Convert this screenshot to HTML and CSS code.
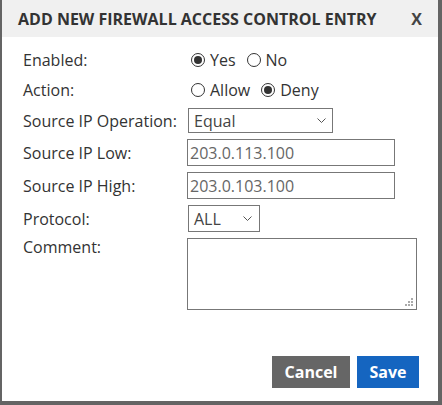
FILE: index.html
```html
<!DOCTYPE html>
<html>
<head>
<meta charset="utf-8">
<link rel="stylesheet" href="styles.css">
</head>
<body>
<div class="dialog">
  <div class="header">
    <span class="title">ADD NEW FIREWALL ACCESS CONTROL ENTRY</span>
    <span class="close">X</span>
  </div>
  <div class="form">
    <div class="row r-enabled">
      <span class="label">Enabled:</span>
      <div class="radios">
        <label class="opt"><span class="radio on"></span>Yes</label>
        <label class="opt"><span class="radio"></span>No</label>
      </div>
    </div>
    <div class="row r-action">
      <span class="label">Action:</span>
      <div class="radios">
        <label class="opt"><span class="radio"></span>Allow</label>
        <label class="opt"><span class="radio on"></span>Deny</label>
      </div>
    </div>
    <div class="row r-op">
      <span class="label">Source IP Operation:</span>
      <div class="select sel-op"><span>Equal</span><svg class="chev" width="9" height="5" viewBox="0 0 9 5"><path d="M0.5 0.5 L4.5 4.5 L8.5 0.5" fill="none" stroke="#555" stroke-width="1"/></svg></div>
    </div>
    <div class="row r-low">
      <span class="label">Source IP Low:</span>
      <div class="input">203.0.113.100</div>
    </div>
    <div class="row r-high">
      <span class="label">Source IP High:</span>
      <div class="input">203.0.103.100</div>
    </div>
    <div class="row r-proto">
      <span class="label">Protocol:</span>
      <div class="select sel-proto"><span>ALL</span><svg class="chev" width="9" height="5" viewBox="0 0 9 5"><path d="M0.5 0.5 L4.5 4.5 L8.5 0.5" fill="none" stroke="#555" stroke-width="1"/></svg></div>
    </div>
    <div class="row r-comment">
      <span class="label">Comment:</span>
      <div class="textarea">
        <svg class="grip" width="9" height="9" viewBox="0 0 9 9">
          <rect x="6" y="0" width="2" height="2" fill="#aaa"/>
          <rect x="3" y="3" width="2" height="2" fill="#aaa"/>
          <rect x="6" y="3" width="2" height="2" fill="#aaa"/>
          <rect x="0" y="6" width="2" height="2" fill="#aaa"/>
          <rect x="3" y="6" width="2" height="2" fill="#aaa"/>
          <rect x="6" y="6" width="2" height="2" fill="#aaa"/>
        </svg>
      </div>
    </div>
  </div>
  <div class="footer">
    <button class="btn cancel">Cancel</button>
    <button class="btn save">Save</button>
  </div>
</div>
</body>
</html>
```

FILE: styles.css
```css
html, body {
  margin: 0;
  padding: 0;
  background: #646464;
  width: 442px;
  height: 405px;
  overflow: hidden;
}
body {
  font-family: "Open Sans", "Liberation Sans", sans-serif;
  color: #333;
}
.dialog {
  margin-left: 2px;
  width: 436px;
  height: 401px;
  background: #fff;
  display: flex;
  flex-direction: column;
}
.header {
  height: 37px;
  background: #f0f0f0;
  display: flex;
  align-items: center;
  justify-content: space-between;
  padding: 0 16px 0 16px;
  box-sizing: border-box;
}
.title {
  font-weight: 700;
  font-size: 16px;
  color: #333;
}
.close {
  font-weight: 700;
  font-size: 16px;
  color: #444;
}
.form {
  padding: 9px 0 0 21px;
  display: flex;
  flex-direction: column;
}
.row {
  display: flex;
  align-items: center;
  font-size: 16px;
}
.label {
  width: 163px;
  flex: none;
}
.r-enabled { height: 28px; }
.r-action { height: 31px; margin-bottom: 3px; }
.r-op { height: 25px; margin-bottom: 6px; }
.r-low { height: 27px; margin-bottom: 6px; }
.r-high { height: 27px; margin-bottom: 6px; }
.r-proto { height: 27px; margin-bottom: 6px; }
.r-comment { align-items: flex-start; }
.r-comment .label { line-height: 20px; margin-top: -1px; }
.radios {
  display: flex;
  gap: 11px;
  padding-left: 5px;
}
.opt {
  display: flex;
  align-items: center;
  color: #333;
}
.radio {
  width: 12px;
  height: 12px;
  border: 1px solid #333;
  border-radius: 50%;
  margin-right: 5px;
  position: relative;
}
.radio.on::after {
  content: "";
  position: absolute;
  left: 2px;
  top: 2px;
  width: 8px;
  height: 8px;
  border-radius: 50%;
  background: #333;
}
.select {
  border: 1px solid #777;
  box-sizing: border-box;
  display: flex;
  align-items: center;
  justify-content: space-between;
  font-size: 16px;
  color: #444;
  margin-left: 2px;
}
.sel-op { width: 145px; height: 25px; padding: 0 6px 0 5px; }
.sel-proto { width: 72px; height: 27px; padding: 0 7px 0 5px; }
.input {
  width: 208px;
  height: 27px;
  border: 1px solid #777;
  box-sizing: border-box;
  display: flex;
  align-items: center;
  padding-left: 2px;
  font-size: 16px;
  color: #666;
  margin-left: 1px;
}
.textarea {
  width: 230px;
  height: 72px;
  border: 1px solid #777;
  box-sizing: border-box;
  margin-left: 1px;
  position: relative;
}
.grip {
  position: absolute;
  right: 2px;
  bottom: 2px;
}
.footer {
  margin-top: auto;
  display: flex;
  justify-content: flex-end;
  gap: 7px;
  padding: 0 19px 13px 0;
}
.btn {
  border: none;
  height: 32px;
  font-family: "Open Sans", "Liberation Sans", sans-serif;
  font-weight: 700;
  font-size: 16px;
  color: #fff;
  padding: 0;
}
.cancel { background: #666; width: 78px; }
.save { background: #1565c0; width: 62px; }
```
